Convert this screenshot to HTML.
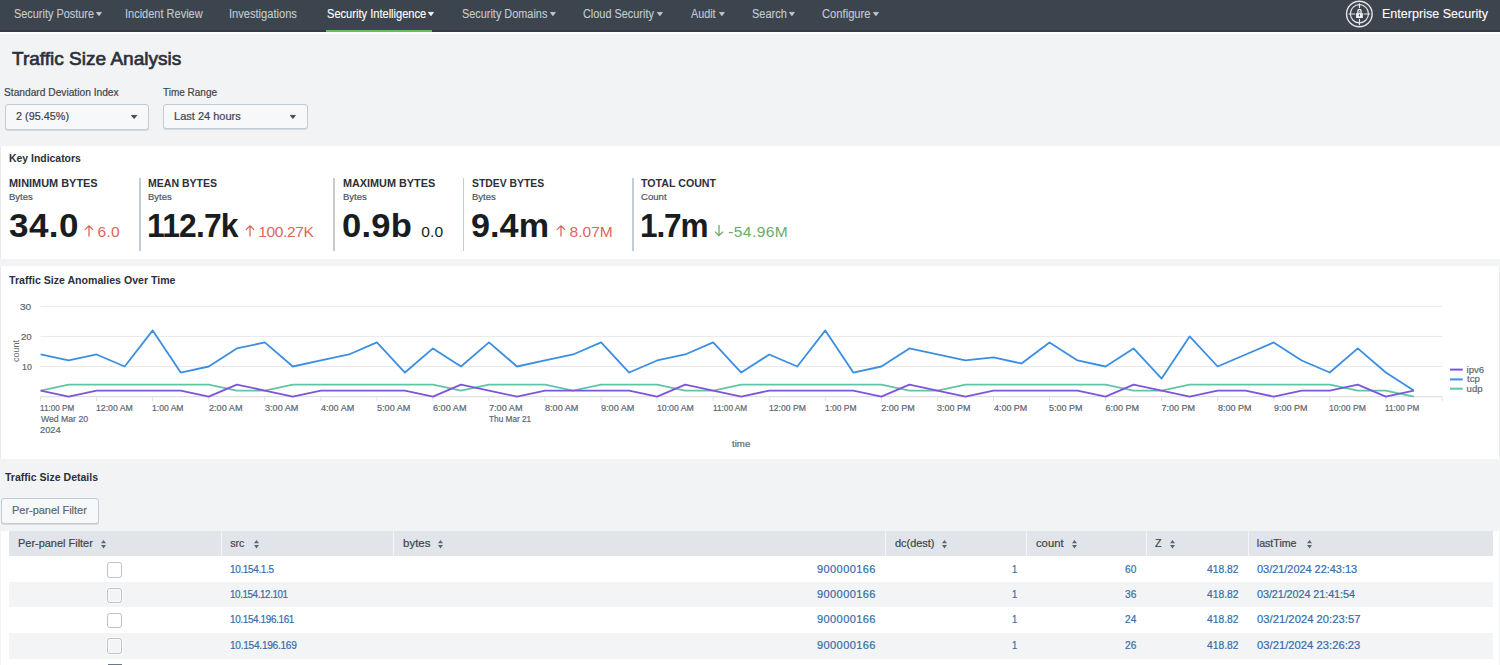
<!DOCTYPE html>
<html><head><meta charset="utf-8"><title>Traffic Size Analysis</title>
<style>
html,body{margin:0;padding:0;}
body{width:1500px;height:665px;overflow:hidden;position:relative;background:#f2f3f5;font-family:"Liberation Sans",sans-serif;}
.t{position:absolute;white-space:nowrap;line-height:1;transform-origin:0 0;}
.r{position:absolute;}
nav,header,section{display:block;position:static;}
.bm{display:inline-block;width:0;height:0;}
.cb{width:15.4px;height:15.4px;box-sizing:border-box;border:1.8px solid #bcc2c8;border-radius:2.8px;background:transparent;box-shadow:0 0 0 0.8px rgba(255,255,255,0.9),inset 0 0 0 0.8px rgba(255,255,255,0.8);}
</style></head><body>
<nav>
<div class="r" style="left:0px;top:0px;width:1500px;height:32px;background:#3c444d;"></div>
<div class="r" style="left:0px;top:30px;width:1500px;height:2px;background:#353b44;"></div>
<div class="r" style="left:0px;top:32px;width:1500px;height:2px;background:#ffffff;"></div>
<div class="t" style="left:13.71px;top:8.03px;font-size:12.21px;color:#c3cad2;transform:scaleX(0.8942);-webkit-text-stroke:0.12px;">Security Posture</div>
<svg class="r" style="left:94.80px;top:10.70px;overflow:visible" width="7.90" height="6.00" viewBox="-1 -1 7.90 6.00"><path d="M0.4 0.4H5.50L2.95 3.70Z" fill="#c3cad2" stroke="#c3cad2" stroke-width="0.8" stroke-linejoin="round"/></svg>
<div class="t" style="left:124.81px;top:8.03px;font-size:12.21px;color:#c3cad2;transform:scaleX(0.9013);-webkit-text-stroke:0.12px;">Incident Review</div>
<div class="t" style="left:228.70px;top:8.03px;font-size:12.21px;color:#c3cad2;transform:scaleX(0.9093);-webkit-text-stroke:0.12px;">Investigations</div>
<div class="t" style="left:327.00px;top:8.03px;font-size:12.21px;color:#ffffff;transform:scaleX(0.9087);-webkit-text-stroke:0.12px;">Security Intelligence</div>
<svg class="r" style="left:427.30px;top:10.70px;overflow:visible" width="7.90" height="6.00" viewBox="-1 -1 7.90 6.00"><path d="M0.4 0.4H5.50L2.95 3.70Z" fill="#ffffff" stroke="#ffffff" stroke-width="0.8" stroke-linejoin="round"/></svg>
<div class="t" style="left:462.01px;top:8.03px;font-size:12.21px;color:#c3cad2;transform:scaleX(0.8925);-webkit-text-stroke:0.12px;">Security Domains</div>
<svg class="r" style="left:549.00px;top:10.70px;overflow:visible" width="7.80" height="6.00" viewBox="-1 -1 7.80 6.00"><path d="M0.4 0.4H5.40L2.90 3.70Z" fill="#c3cad2" stroke="#c3cad2" stroke-width="0.8" stroke-linejoin="round"/></svg>
<div class="t" style="left:583.25px;top:8.03px;font-size:12.21px;color:#c3cad2;transform:scaleX(0.8933);-webkit-text-stroke:0.12px;">Cloud Security</div>
<svg class="r" style="left:656.20px;top:10.70px;overflow:visible" width="7.80" height="6.00" viewBox="-1 -1 7.80 6.00"><path d="M0.4 0.4H5.40L2.90 3.70Z" fill="#c3cad2" stroke="#c3cad2" stroke-width="0.8" stroke-linejoin="round"/></svg>
<div class="t" style="left:691.30px;top:8.03px;font-size:12.21px;color:#c3cad2;transform:scaleX(0.8840);-webkit-text-stroke:0.12px;">Audit</div>
<svg class="r" style="left:717.70px;top:10.70px;overflow:visible" width="7.80" height="6.00" viewBox="-1 -1 7.80 6.00"><path d="M0.4 0.4H5.40L2.90 3.70Z" fill="#c3cad2" stroke="#c3cad2" stroke-width="0.8" stroke-linejoin="round"/></svg>
<div class="t" style="left:752.00px;top:8.03px;font-size:12.21px;color:#c3cad2;transform:scaleX(0.9035);-webkit-text-stroke:0.12px;">Search</div>
<svg class="r" style="left:787.70px;top:10.70px;overflow:visible" width="7.80" height="6.00" viewBox="-1 -1 7.80 6.00"><path d="M0.4 0.4H5.40L2.90 3.70Z" fill="#c3cad2" stroke="#c3cad2" stroke-width="0.8" stroke-linejoin="round"/></svg>
<div class="t" style="left:821.94px;top:8.03px;font-size:12.21px;color:#c3cad2;transform:scaleX(0.9176);-webkit-text-stroke:0.12px;">Configure</div>
<svg class="r" style="left:871.80px;top:10.70px;overflow:visible" width="7.90" height="6.00" viewBox="-1 -1 7.90 6.00"><path d="M0.4 0.4H5.50L2.95 3.70Z" fill="#c3cad2" stroke="#c3cad2" stroke-width="0.8" stroke-linejoin="round"/></svg>
<div class="r" style="left:326.2px;top:29.5px;width:105.80000000000001px;height:2.5px;background:#65bf5f;"></div>
<svg class="r" style="left:1344px;top:0px" width="32" height="30" viewBox="1344 0 32 30">
<g fill="none" stroke="#e3e5e8">
<circle cx="1359.35" cy="14" r="12.8" stroke-width="1.4"/>
<circle cx="1359.4" cy="13.8" r="9.1" stroke-width="1.2"/>
<path d="M1359.45 3.2V25.2M1348.4 14H1370.2" stroke-width="1.2"/>
</g>
<path d="M1357.85 12.6V11.0a1.6 1.6 0 0 1 3.2 0V12.6" fill="none" stroke="#3c444d" stroke-width="2.6"/>
<rect x="1355.3" y="12.4" width="8.3" height="6.4" fill="#3c444d"/>
<path d="M1357.85 13.2V11.0a1.6 1.6 0 0 1 3.2 0V13.2" fill="none" stroke="#f4f5f6" stroke-width="1.3"/>
<rect x="1356.1" y="13.1" width="6.7" height="4.9" fill="#f4f5f6"/>
<ellipse cx="1359.45" cy="15.4" rx="0.7" ry="1.1" fill="#3c444d"/>
</svg>
<div class="t" style="left:1381.70px;top:8.02px;font-size:12.50px;color:#ffffff;transform:scaleX(1.0036);-webkit-text-stroke:0.1px;">Enterprise Security</div>
</nav>
<header>
<div class="t" style="left:11.62px;top:50.03px;font-size:18.60px;color:#2b3039;transform:scaleX(1.0239);-webkit-text-stroke:0.65px;">Traffic Size Analysis</div>
<div class="t" style="left:4.34px;top:87.02px;font-size:10.61px;color:#3c444d;transform:scaleX(0.9623);-webkit-text-stroke:0.2px;">Standard Deviation Index</div>
<div class="t" style="left:163.30px;top:87.02px;font-size:10.61px;color:#3c444d;transform:scaleX(0.9416);-webkit-text-stroke:0.2px;">Time Range</div>
<div class="r" style="left:4.5px;top:104px;width:144.5px;height:25.5px;background:#f7f8fa;border:1px solid #c3cbd4;border-radius:3px;box-sizing:border-box;box-shadow:0 1px 0 #d5dade;"></div>
<div class="r" style="left:163px;top:103.5px;width:144.5px;height:25.5px;background:#f7f8fa;border:1px solid #c3cbd4;border-radius:3px;box-sizing:border-box;box-shadow:0 1px 0 #d5dade;"></div>
<div class="t" style="left:15.96px;top:110.02px;font-size:11.63px;color:#3c444d;transform:scaleX(0.9320);-webkit-text-stroke:0.2px;">2 (95.45%)</div>
<div class="t" style="left:173.82px;top:111.03px;font-size:11.48px;color:#3c444d;transform:scaleX(0.9610);-webkit-text-stroke:0.2px;">Last 24 hours</div>
<svg class="r" style="left:130.40px;top:114.00px;overflow:visible" width="8.20" height="5.80" viewBox="-1 -1 8.20 5.80"><path d="M0.4 0.4H5.80L3.10 3.50Z" fill="#3c444d" stroke="#3c444d" stroke-width="0.8" stroke-linejoin="round"/></svg>
<svg class="r" style="left:289.00px;top:113.70px;overflow:visible" width="7.80" height="5.80" viewBox="-1 -1 7.80 5.80"><path d="M0.4 0.4H5.40L2.90 3.50Z" fill="#3c444d" stroke="#3c444d" stroke-width="0.8" stroke-linejoin="round"/></svg>
</header>
<section>
<div class="r" style="left:0px;top:146px;width:1500px;height:113.30000000000001px;background:#ffffff;border-left:1px solid #e9ebee;box-sizing:border-box;"></div>
<div class="t" style="left:8.82px;top:153.03px;font-size:10.90px;color:#2b3039;transform:scaleX(0.9572);font-weight:bold;">Key Indicators</div>
<div class="t" style="left:8.79px;top:179.03px;font-size:10.47px;color:#2b3039;transform:scaleX(1.0438);font-weight:bold;">MINIMUM BYTES</div>
<div class="t" style="left:8.74px;top:193.02px;font-size:9.16px;color:#4d555e;transform:scaleX(1.0348);-webkit-text-stroke:0.2px;">Bytes</div>
<div class="t" style="left:8.62px;top:208.03px;font-size:34.01px;color:#171d21;transform:scaleX(1.0306);letter-spacing:0.434px;font-weight:bold;">34.0</div>
<svg class="r" style="left:83.9px;top:225px" width="10" height="12" viewBox="0 0 10 12"><path d="M5 0.8V11.5M0.9 4.9L5 0.8L9.1 4.9" fill="none" stroke="#d9685a" stroke-width="1.3"/></svg>
<div class="t" style="left:97.62px;top:224.03px;font-size:15.55px;color:#d9685a;letter-spacing:0.252px;-webkit-text-stroke:0;">6.0</div>
<div class="t" style="left:148.32px;top:179.03px;font-size:10.47px;color:#2b3039;transform:scaleX(1.0051);font-weight:bold;">MEAN BYTES</div>
<div class="t" style="left:148.24px;top:193.02px;font-size:9.16px;color:#4d555e;transform:scaleX(1.0348);-webkit-text-stroke:0.2px;">Bytes</div>
<div class="t" style="left:147.09px;top:208.03px;font-size:34.01px;color:#171d21;transform:scaleX(0.9358);letter-spacing:-0.856px;font-weight:bold;">112.7k</div>
<svg class="r" style="left:245.0px;top:225px" width="10" height="12" viewBox="0 0 10 12"><path d="M5 0.8V11.5M0.9 4.9L5 0.8L9.1 4.9" fill="none" stroke="#d9685a" stroke-width="1.3"/></svg>
<div class="t" style="left:258.33px;top:224.03px;font-size:15.55px;color:#d9685a;letter-spacing:-0.385px;-webkit-text-stroke:0;">100.27K</div>
<div class="t" style="left:342.60px;top:179.03px;font-size:10.47px;color:#2b3039;transform:scaleX(1.0352);font-weight:bold;">MAXIMUM BYTES</div>
<div class="t" style="left:342.54px;top:193.02px;font-size:9.16px;color:#4d555e;transform:scaleX(1.0348);-webkit-text-stroke:0.2px;">Bytes</div>
<div class="t" style="left:341.92px;top:208.03px;font-size:34.01px;color:#171d21;transform:scaleX(1.0165);letter-spacing:0.240px;font-weight:bold;">0.9b</div>
<div class="t" style="left:421.18px;top:224.03px;font-size:15.55px;color:#171d21;letter-spacing:0.124px;-webkit-text-stroke:0;">0.0</div>
<div class="t" style="left:472.19px;top:179.03px;font-size:10.47px;color:#2b3039;transform:scaleX(0.9917);font-weight:bold;">STDEV BYTES</div>
<div class="t" style="left:471.74px;top:193.02px;font-size:9.16px;color:#4d555e;transform:scaleX(1.0348);-webkit-text-stroke:0.2px;">Bytes</div>
<div class="t" style="left:471.30px;top:208.03px;font-size:34.01px;color:#171d21;transform:scaleX(1.0039);letter-spacing:0.065px;font-weight:bold;">9.4m</div>
<svg class="r" style="left:555.7px;top:225px" width="10" height="12" viewBox="0 0 10 12"><path d="M5 0.8V11.5M0.9 4.9L5 0.8L9.1 4.9" fill="none" stroke="#d9685a" stroke-width="1.3"/></svg>
<div class="t" style="left:569.50px;top:224.03px;font-size:15.55px;color:#d9685a;letter-spacing:0.022px;-webkit-text-stroke:0;">8.07M</div>
<div class="t" style="left:641.29px;top:179.03px;font-size:10.47px;color:#2b3039;transform:scaleX(1.0160);font-weight:bold;">TOTAL COUNT</div>
<div class="t" style="left:640.92px;top:193.02px;font-size:9.16px;color:#4d555e;transform:scaleX(1.0460);-webkit-text-stroke:0.2px;">Count</div>
<div class="t" style="left:639.51px;top:208.03px;font-size:34.01px;color:#171d21;transform:scaleX(0.9276);letter-spacing:-1.182px;font-weight:bold;">1.7m</div>
<svg class="r" style="left:714.4px;top:225px" width="10" height="12" viewBox="0 0 10 12"><path d="M5 0V10.7M0.9 6.6L5 10.7L9.1 6.6" fill="none" stroke="#6bab66" stroke-width="1.3"/></svg>
<div class="t" style="left:728.20px;top:224.03px;font-size:15.55px;color:#6bab66;letter-spacing:0.424px;-webkit-text-stroke:0;">-54.96M</div>
<div class="r" style="left:139.2px;top:178px;width:1.5px;height:73px;background:#c3cbd4;"></div>
<div class="r" style="left:333.4px;top:178px;width:1.5px;height:73px;background:#c3cbd4;"></div>
<div class="r" style="left:462.9px;top:178px;width:1.5px;height:73px;background:#c3cbd4;"></div>
<div class="r" style="left:632.3px;top:178px;width:1.5px;height:73px;background:#c3cbd4;"></div>
</section>
<section>
<div class="r" style="left:0px;top:266px;width:1500px;height:193px;background:#ffffff;border-left:1px solid #e9ebee;border-right:1px solid #e9ebee;box-sizing:border-box;"></div>
<div class="t" style="left:9.49px;top:275.02px;font-size:10.76px;color:#2b3039;transform:scaleX(0.9846);font-weight:bold;">Traffic Size Anomalies Over Time</div>
<div class="t" style="left:20.30px;top:303.03px;font-size:9.16px;color:#5e6670;transform:scaleX(1.0973);-webkit-text-stroke:0.2px;">30</div>
<div class="t" style="left:20.72px;top:333.03px;font-size:9.16px;color:#5e6670;transform:scaleX(1.0548);-webkit-text-stroke:0.2px;">20</div>
<div class="t" style="left:21.64px;top:363.02px;font-size:9.16px;color:#5e6670;transform:scaleX(0.9610);-webkit-text-stroke:0.2px;">10</div>
<svg class="r" style="left:0;top:266px" width="1500" height="193" viewBox="0 266 1500 193"><line x1="40.6" y1="366.50" x2="1442.3" y2="366.50" stroke="#e8e9eb" stroke-width="1"/><line x1="40.6" y1="336.40" x2="1442.3" y2="336.40" stroke="#e8e9eb" stroke-width="1"/><line x1="40.6" y1="306.30" x2="1442.3" y2="306.30" stroke="#e8e9eb" stroke-width="1"/><line x1="40.6" y1="396.60" x2="1442.3" y2="396.60" stroke="#dfe2e5" stroke-width="1.2"/><line x1="40.60" y1="396.60" x2="40.60" y2="401.10" stroke="#e0e2e5" stroke-width="1"/><line x1="96.65" y1="396.60" x2="96.65" y2="401.10" stroke="#e0e2e5" stroke-width="1"/><line x1="152.70" y1="396.60" x2="152.70" y2="401.10" stroke="#e0e2e5" stroke-width="1"/><line x1="208.75" y1="396.60" x2="208.75" y2="401.10" stroke="#e0e2e5" stroke-width="1"/><line x1="264.80" y1="396.60" x2="264.80" y2="401.10" stroke="#e0e2e5" stroke-width="1"/><line x1="320.85" y1="396.60" x2="320.85" y2="401.10" stroke="#e0e2e5" stroke-width="1"/><line x1="376.90" y1="396.60" x2="376.90" y2="401.10" stroke="#e0e2e5" stroke-width="1"/><line x1="432.95" y1="396.60" x2="432.95" y2="401.10" stroke="#e0e2e5" stroke-width="1"/><line x1="489.00" y1="396.60" x2="489.00" y2="401.10" stroke="#e0e2e5" stroke-width="1"/><line x1="545.05" y1="396.60" x2="545.05" y2="401.10" stroke="#e0e2e5" stroke-width="1"/><line x1="601.10" y1="396.60" x2="601.10" y2="401.10" stroke="#e0e2e5" stroke-width="1"/><line x1="657.15" y1="396.60" x2="657.15" y2="401.10" stroke="#e0e2e5" stroke-width="1"/><line x1="713.20" y1="396.60" x2="713.20" y2="401.10" stroke="#e0e2e5" stroke-width="1"/><line x1="769.25" y1="396.60" x2="769.25" y2="401.10" stroke="#e0e2e5" stroke-width="1"/><line x1="825.30" y1="396.60" x2="825.30" y2="401.10" stroke="#e0e2e5" stroke-width="1"/><line x1="881.35" y1="396.60" x2="881.35" y2="401.10" stroke="#e0e2e5" stroke-width="1"/><line x1="937.40" y1="396.60" x2="937.40" y2="401.10" stroke="#e0e2e5" stroke-width="1"/><line x1="993.45" y1="396.60" x2="993.45" y2="401.10" stroke="#e0e2e5" stroke-width="1"/><line x1="1049.50" y1="396.60" x2="1049.50" y2="401.10" stroke="#e0e2e5" stroke-width="1"/><line x1="1105.55" y1="396.60" x2="1105.55" y2="401.10" stroke="#e0e2e5" stroke-width="1"/><line x1="1161.60" y1="396.60" x2="1161.60" y2="401.10" stroke="#e0e2e5" stroke-width="1"/><line x1="1217.65" y1="396.60" x2="1217.65" y2="401.10" stroke="#e0e2e5" stroke-width="1"/><line x1="1273.70" y1="396.60" x2="1273.70" y2="401.10" stroke="#e0e2e5" stroke-width="1"/><line x1="1329.75" y1="396.60" x2="1329.75" y2="401.10" stroke="#e0e2e5" stroke-width="1"/><line x1="1385.80" y1="396.60" x2="1385.80" y2="401.10" stroke="#e0e2e5" stroke-width="1"/><line x1="1442.30" y1="396.60" x2="1442.30" y2="401.10" stroke="#e0e2e5" stroke-width="1"/><polyline points="40.60,390.58 68.62,384.56 96.65,384.56 124.67,384.56 152.70,384.56 180.72,384.56 208.75,384.56 236.77,390.58 264.80,390.58 292.82,384.56 320.85,384.56 348.88,384.56 376.90,384.56 404.93,384.56 432.95,384.56 460.98,390.58 489.00,384.56 517.02,384.56 545.05,384.56 573.08,390.58 601.10,384.56 629.12,384.56 657.15,384.56 685.17,390.58 713.20,390.58 741.23,384.56 769.25,384.56 797.27,384.56 825.30,384.56 853.32,384.56 881.35,384.56 909.38,390.58 937.40,390.58 965.42,384.56 993.45,384.56 1021.48,384.56 1049.50,384.56 1077.52,384.56 1105.55,384.56 1133.57,390.58 1161.60,390.58 1189.62,384.56 1217.65,384.56 1245.67,384.56 1273.70,384.56 1301.72,384.56 1329.75,384.56 1357.77,390.58 1385.80,390.58 1413.82,396.60" fill="none" stroke="#5fc5a6" stroke-width="1.8" stroke-linejoin="round"/><polyline points="40.60,390.58 68.62,396.60 96.65,390.58 124.67,390.58 152.70,390.58 180.72,390.58 208.75,396.60 236.77,384.56 264.80,390.58 292.82,396.60 320.85,390.58 348.88,390.58 376.90,390.58 404.93,390.58 432.95,396.60 460.98,384.56 489.00,390.58 517.02,396.60 545.05,390.58 573.08,390.58 601.10,390.58 629.12,390.58 657.15,396.60 685.17,384.56 713.20,390.58 741.23,396.60 769.25,390.58 797.27,390.58 825.30,390.58 853.32,390.58 881.35,396.60 909.38,384.56 937.40,390.58 965.42,396.60 993.45,390.58 1021.48,390.58 1049.50,390.58 1077.52,390.58 1105.55,396.60 1133.57,384.56 1161.60,390.58 1189.62,396.60 1217.65,390.58 1245.67,390.58 1273.70,396.60 1301.72,390.58 1329.75,390.58 1357.77,384.56 1385.80,396.60 1413.82,390.58" fill="none" stroke="#7b56db" stroke-width="1.8" stroke-linejoin="round"/><polyline points="40.60,354.46 68.62,360.48 96.65,354.46 124.67,366.50 152.70,330.38 180.72,372.52 208.75,366.50 236.77,348.44 264.80,342.42 292.82,366.50 320.85,360.48 348.88,354.46 376.90,342.42 404.93,372.52 432.95,348.44 460.98,366.50 489.00,342.42 517.02,366.50 545.05,360.48 573.08,354.46 601.10,342.42 629.12,372.52 657.15,360.48 685.17,354.46 713.20,342.42 741.23,372.52 769.25,354.46 797.27,366.50 825.30,330.38 853.32,372.52 881.35,366.50 909.38,348.44 937.40,354.46 965.42,360.48 993.45,357.47 1021.48,363.49 1049.50,342.42 1077.52,360.48 1105.55,366.50 1133.57,348.44 1161.60,378.54 1189.62,336.40 1217.65,366.50 1245.67,354.46 1273.70,342.42 1301.72,360.48 1329.75,372.52 1357.77,348.44 1385.80,372.52 1413.82,390.58" fill="none" stroke="#3b8fe2" stroke-width="1.8" stroke-linejoin="round"/><line x1="1450" y1="369.6" x2="1462.7" y2="369.6" stroke="#7b56db" stroke-width="2"/><line x1="1450" y1="379.4" x2="1462.7" y2="379.4" stroke="#3b8fe2" stroke-width="2"/><line x1="1450" y1="388.7" x2="1462.7" y2="388.7" stroke="#5fc5a6" stroke-width="2"/></svg>
<div class="t" style="left:40.29px;top:404.03px;font-size:9.01px;color:#5e6670;transform:scaleX(0.9042);-webkit-text-stroke:0.2px;">11:00 PM</div>
<div class="t" style="left:96.30px;top:404.03px;font-size:9.01px;color:#5e6670;transform:scaleX(0.9691);-webkit-text-stroke:0.2px;">12:00 AM</div>
<div class="t" style="left:152.35px;top:404.03px;font-size:9.01px;color:#5e6670;transform:scaleX(0.9548);-webkit-text-stroke:0.2px;">1:00 AM</div>
<div class="t" style="left:208.59px;top:404.03px;font-size:9.01px;color:#5e6670;transform:scaleX(1.0139);-webkit-text-stroke:0.2px;">2:00 AM</div>
<div class="t" style="left:264.74px;top:404.03px;font-size:9.01px;color:#5e6670;transform:scaleX(1.0111);-webkit-text-stroke:0.2px;">3:00 AM</div>
<div class="t" style="left:320.97px;top:404.03px;font-size:9.01px;color:#5e6670;transform:scaleX(1.0054);-webkit-text-stroke:0.2px;">4:00 AM</div>
<div class="t" style="left:376.84px;top:404.03px;font-size:9.01px;color:#5e6670;transform:scaleX(1.0111);-webkit-text-stroke:0.2px;">5:00 AM</div>
<div class="t" style="left:432.79px;top:404.03px;font-size:9.01px;color:#5e6670;transform:scaleX(1.0139);-webkit-text-stroke:0.2px;">6:00 AM</div>
<div class="t" style="left:488.84px;top:404.03px;font-size:9.01px;color:#5e6670;transform:scaleX(1.0139);-webkit-text-stroke:0.2px;">7:00 AM</div>
<div class="t" style="left:544.94px;top:404.03px;font-size:9.01px;color:#5e6670;transform:scaleX(1.0125);-webkit-text-stroke:0.2px;">8:00 AM</div>
<div class="t" style="left:600.99px;top:404.03px;font-size:9.01px;color:#5e6670;transform:scaleX(1.0125);-webkit-text-stroke:0.2px;">9:00 AM</div>
<div class="t" style="left:656.80px;top:404.03px;font-size:9.01px;color:#5e6670;transform:scaleX(0.9691);-webkit-text-stroke:0.2px;">10:00 AM</div>
<div class="t" style="left:712.88px;top:404.03px;font-size:9.01px;color:#5e6670;transform:scaleX(0.9166);-webkit-text-stroke:0.2px;">11:00 AM</div>
<div class="t" style="left:768.90px;top:404.03px;font-size:9.01px;color:#5e6670;transform:scaleX(0.9562);-webkit-text-stroke:0.2px;">12:00 PM</div>
<div class="t" style="left:824.96px;top:404.03px;font-size:9.01px;color:#5e6670;transform:scaleX(0.9400);-webkit-text-stroke:0.2px;">1:00 PM</div>
<div class="t" style="left:881.20px;top:404.03px;font-size:9.01px;color:#5e6670;-webkit-text-stroke:0.2px;">2:00 PM</div>
<div class="t" style="left:937.34px;top:404.03px;font-size:9.01px;color:#5e6670;transform:scaleX(0.9956);-webkit-text-stroke:0.2px;">3:00 PM</div>
<div class="t" style="left:993.57px;top:404.03px;font-size:9.01px;color:#5e6670;transform:scaleX(0.9901);-webkit-text-stroke:0.2px;">4:00 PM</div>
<div class="t" style="left:1049.44px;top:404.03px;font-size:9.01px;color:#5e6670;transform:scaleX(0.9956);-webkit-text-stroke:0.2px;">5:00 PM</div>
<div class="t" style="left:1105.40px;top:404.03px;font-size:9.01px;color:#5e6670;-webkit-text-stroke:0.2px;">6:00 PM</div>
<div class="t" style="left:1161.45px;top:404.03px;font-size:9.01px;color:#5e6670;-webkit-text-stroke:0.2px;">7:00 PM</div>
<div class="t" style="left:1217.55px;top:404.03px;font-size:9.01px;color:#5e6670;transform:scaleX(0.9970);-webkit-text-stroke:0.2px;">8:00 PM</div>
<div class="t" style="left:1273.60px;top:404.03px;font-size:9.01px;color:#5e6670;transform:scaleX(0.9970);-webkit-text-stroke:0.2px;">9:00 PM</div>
<div class="t" style="left:1329.40px;top:404.03px;font-size:9.01px;color:#5e6670;transform:scaleX(0.9562);-webkit-text-stroke:0.2px;">10:00 PM</div>
<div class="t" style="left:1385.49px;top:404.03px;font-size:9.01px;color:#5e6670;transform:scaleX(0.9042);-webkit-text-stroke:0.2px;">11:00 PM</div>
<div class="t" style="left:40.86px;top:415.03px;font-size:9.01px;color:#5e6670;transform:scaleX(0.9623);-webkit-text-stroke:0.2px;">Wed Mar 20</div>
<div class="t" style="left:40.43px;top:426.03px;font-size:9.01px;color:#5e6670;transform:scaleX(1.0347);-webkit-text-stroke:0.2px;">2024</div>
<div class="t" style="left:489.13px;top:415.03px;font-size:9.01px;color:#5e6670;transform:scaleX(0.9172);-webkit-text-stroke:0.2px;">Thu Mar 21</div>
<div class="t" style="left:732.15px;top:440.03px;font-size:9.01px;color:#5e6670;transform:scaleX(1.0733);-webkit-text-stroke:0.2px;">time</div>
<div class="t" style="left:1466.58px;top:365.03px;font-size:9.59px;color:#5e6670;-webkit-text-stroke:0.2px;">ipv6</div>
<div class="t" style="left:1467.06px;top:374.03px;font-size:9.59px;color:#5e6670;-webkit-text-stroke:0.2px;">tcp</div>
<div class="t" style="left:1466.58px;top:384.02px;font-size:9.59px;color:#5e6670;-webkit-text-stroke:0.2px;">udp</div>
<div class="t rot" style="left:4px;top:345px;width:24px;height:12px;font-size:9px;color:#5e6670;transform:rotate(-90deg);transform-origin:12px 6px;text-align:center;line-height:12px;">count</div>
</section>
<section>
<div class="t" style="left:5.39px;top:472.03px;font-size:11.05px;color:#2b3039;transform:scaleX(0.9532);font-weight:bold;">Traffic Size Details</div>
<div class="r" style="left:1.2px;top:497.9px;width:98.1px;height:25.899999999999977px;background:#f7f8fa;border:1px solid #c3cbd4;border-radius:3px;box-sizing:border-box;box-shadow:0 1px 0 #d5dade;"></div>
<div class="t" style="left:12.32px;top:505.02px;font-size:11.19px;color:#5c6773;transform:scaleX(0.9783);-webkit-text-stroke:0.2px;">Per-panel Filter</div>
<div class="r" style="left:1px;top:530.8px;width:1498px;height:134.20000000000005px;background:#ffffff;"></div>
<div class="r" style="left:9px;top:530.8px;width:1483.6px;height:25.300000000000068px;background:#e1e4e8;"></div>
<div class="r" style="left:220.5px;top:530.8px;width:1.0px;height:25.300000000000068px;background:#f2f4f6;"></div>
<div class="r" style="left:393.4px;top:530.8px;width:1.0px;height:25.300000000000068px;background:#f2f4f6;"></div>
<div class="r" style="left:884.7px;top:530.8px;width:1.0px;height:25.300000000000068px;background:#f2f4f6;"></div>
<div class="r" style="left:1026.2px;top:530.8px;width:1.0px;height:25.300000000000068px;background:#f2f4f6;"></div>
<div class="r" style="left:1145.8px;top:530.8px;width:1.0px;height:25.300000000000068px;background:#f2f4f6;"></div>
<div class="r" style="left:1247.5px;top:530.8px;width:1.0px;height:25.300000000000068px;background:#f2f4f6;"></div>
<div class="r" style="left:9px;top:581.9px;width:1483.6px;height:25.600000000000023px;background:#f2f4f5;"></div>
<div class="r" style="left:9px;top:633.2px;width:1483.6px;height:25.59999999999991px;background:#f2f4f5;"></div>
<div class="t" style="left:17.72px;top:538.03px;font-size:10.61px;color:#3c444d;transform:scaleX(1.0320);-webkit-text-stroke:0.2px;">Per-panel Filter</div>
<svg class="r" style="left:101.0px;top:540px" width="5" height="9" viewBox="0 0 5 9"><path d="M2.5 0.1L5 3.2H0Z M0 5.1H5L2.5 8.4Z" fill="#5c6773"/></svg>
<div class="t" style="left:230.28px;top:538.03px;font-size:10.61px;color:#3c444d;-webkit-text-stroke:0.2px;">src</div>
<svg class="r" style="left:253.8px;top:540px" width="5" height="9" viewBox="0 0 5 9"><path d="M2.5 0.1L5 3.2H0Z M0 5.1H5L2.5 8.4Z" fill="#5c6773"/></svg>
<div class="t" style="left:402.85px;top:538.03px;font-size:10.61px;color:#3c444d;transform:scaleX(1.0824);-webkit-text-stroke:0.2px;">bytes</div>
<svg class="r" style="left:438.2px;top:540px" width="5" height="9" viewBox="0 0 5 9"><path d="M2.5 0.1L5 3.2H0Z M0 5.1H5L2.5 8.4Z" fill="#5c6773"/></svg>
<div class="t" style="left:894.56px;top:538.03px;font-size:10.61px;color:#3c444d;transform:scaleX(1.0284);-webkit-text-stroke:0.2px;">dc(dest)</div>
<svg class="r" style="left:941.6px;top:540px" width="5" height="9" viewBox="0 0 5 9"><path d="M2.5 0.1L5 3.2H0Z M0 5.1H5L2.5 8.4Z" fill="#5c6773"/></svg>
<div class="t" style="left:1036.25px;top:538.03px;font-size:10.61px;color:#3c444d;transform:scaleX(1.0603);-webkit-text-stroke:0.2px;">count</div>
<svg class="r" style="left:1072.0px;top:540px" width="5" height="9" viewBox="0 0 5 9"><path d="M2.5 0.1L5 3.2H0Z M0 5.1H5L2.5 8.4Z" fill="#5c6773"/></svg>
<div class="t" style="left:1155.48px;top:538.03px;font-size:10.61px;color:#3c444d;transform:scaleX(1.0110);-webkit-text-stroke:0.2px;">Z</div>
<svg class="r" style="left:1170.4px;top:540px" width="5" height="9" viewBox="0 0 5 9"><path d="M2.5 0.1L5 3.2H0Z M0 5.1H5L2.5 8.4Z" fill="#5c6773"/></svg>
<div class="t" style="left:1256.81px;top:538.03px;font-size:10.61px;color:#3c444d;-webkit-text-stroke:0.2px;">lastTime</div>
<svg class="r" style="left:1306.8px;top:540px" width="5" height="9" viewBox="0 0 5 9"><path d="M2.5 0.1L5 3.2H0Z M0 5.1H5L2.5 8.4Z" fill="#5c6773"/></svg>
<div class="r cb" style="left:107.1px;top:562.2px;"></div>
<div class="t" style="left:230.05px;top:564.02px;font-size:11.05px;color:#356ca9;transform:scaleX(0.9007);letter-spacing:-0.374px;-webkit-text-stroke:0.2px;">10.154.1.5</div>
<div class="t" style="left:817.00px;top:564.02px;font-size:11.05px;color:#356ca9;letter-spacing:0.394px;-webkit-text-stroke:0.2px;">900000166</div>
<div class="t" style="left:1257.46px;top:564.02px;font-size:11.05px;color:#356ca9;transform:scaleX(0.9924);letter-spacing:-0.028px;-webkit-text-stroke:0.2px;">03/21/2024 22:43:13</div>
<div class="t" style="left:1011.91px;top:564.02px;font-size:11.05px;color:#356ca9;transform:scaleX(0.8500);-webkit-text-stroke:0.2px;">1</div>
<div class="t" style="left:1124.88px;top:564.02px;font-size:11.05px;color:#356ca9;transform:scaleX(0.9200);-webkit-text-stroke:0.2px;">60</div>
<div class="t" style="left:1206.88px;top:564.02px;font-size:11.05px;color:#356ca9;transform:scaleX(0.9300);-webkit-text-stroke:0.2px;">418.82</div>
<div class="r cb" style="left:107.1px;top:587.6px;"></div>
<div class="t" style="left:230.06px;top:589.02px;font-size:11.05px;color:#356ca9;transform:scaleX(0.8873);letter-spacing:-0.434px;-webkit-text-stroke:0.2px;">10.154.12.101</div>
<div class="t" style="left:817.00px;top:589.02px;font-size:11.05px;color:#356ca9;letter-spacing:0.394px;-webkit-text-stroke:0.2px;">900000166</div>
<div class="t" style="left:1257.47px;top:589.02px;font-size:11.05px;color:#356ca9;transform:scaleX(0.9792);letter-spacing:-0.077px;-webkit-text-stroke:0.2px;">03/21/2024 21:41:54</div>
<div class="t" style="left:1011.91px;top:589.02px;font-size:11.05px;color:#356ca9;transform:scaleX(0.8500);-webkit-text-stroke:0.2px;">1</div>
<div class="t" style="left:1124.93px;top:589.02px;font-size:11.05px;color:#356ca9;transform:scaleX(0.9200);-webkit-text-stroke:0.2px;">36</div>
<div class="t" style="left:1206.88px;top:589.02px;font-size:11.05px;color:#356ca9;transform:scaleX(0.9300);-webkit-text-stroke:0.2px;">418.82</div>
<div class="r cb" style="left:107.1px;top:613.0px;"></div>
<div class="t" style="left:230.06px;top:614.03px;font-size:11.05px;color:#356ca9;transform:scaleX(0.8978);letter-spacing:-0.395px;-webkit-text-stroke:0.2px;">10.154.196.161</div>
<div class="t" style="left:817.00px;top:614.03px;font-size:11.05px;color:#356ca9;letter-spacing:0.394px;-webkit-text-stroke:0.2px;">900000166</div>
<div class="t" style="left:1257.45px;top:614.03px;font-size:11.05px;color:#356ca9;transform:scaleX(1.0122);letter-spacing:0.045px;-webkit-text-stroke:0.2px;">03/21/2024 20:23:57</div>
<div class="t" style="left:1011.91px;top:614.03px;font-size:11.05px;color:#356ca9;transform:scaleX(0.8500);-webkit-text-stroke:0.2px;">1</div>
<div class="t" style="left:1124.82px;top:614.03px;font-size:11.05px;color:#356ca9;transform:scaleX(0.9200);-webkit-text-stroke:0.2px;">24</div>
<div class="t" style="left:1206.88px;top:614.03px;font-size:11.05px;color:#356ca9;transform:scaleX(0.9300);-webkit-text-stroke:0.2px;">418.82</div>
<div class="r cb" style="left:107.1px;top:638.4px;"></div>
<div class="t" style="left:230.04px;top:640.03px;font-size:11.05px;color:#356ca9;transform:scaleX(0.9193);letter-spacing:-0.312px;-webkit-text-stroke:0.2px;">10.154.196.169</div>
<div class="t" style="left:817.00px;top:640.03px;font-size:11.05px;color:#356ca9;letter-spacing:0.394px;-webkit-text-stroke:0.2px;">900000166</div>
<div class="t" style="left:1257.45px;top:640.03px;font-size:11.05px;color:#356ca9;transform:scaleX(1.0115);letter-spacing:0.043px;-webkit-text-stroke:0.2px;">03/21/2024 23:26:23</div>
<div class="t" style="left:1011.91px;top:640.03px;font-size:11.05px;color:#356ca9;transform:scaleX(0.8500);-webkit-text-stroke:0.2px;">1</div>
<div class="t" style="left:1124.93px;top:640.03px;font-size:11.05px;color:#356ca9;transform:scaleX(0.9200);-webkit-text-stroke:0.2px;">26</div>
<div class="t" style="left:1206.88px;top:640.03px;font-size:11.05px;color:#356ca9;transform:scaleX(0.9300);-webkit-text-stroke:0.2px;">418.82</div>
<div class="r" style="left:107.5px;top:663.9px;width:14.200000000000003px;height:1.1000000000000227px;background:#6f7882;"></div>
</section>
</body></html>
